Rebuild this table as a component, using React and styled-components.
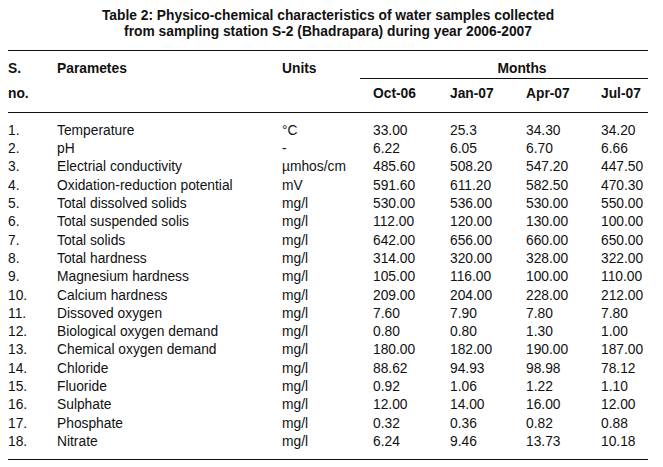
import styled, { createGlobalStyle } from 'styled-components'

const GlobalStyle = createGlobalStyle`
  html, body {
    margin: 0;
    padding: 0;
    background: #fff;
  }
  body {
    font-family: "Liberation Sans", Arial, sans-serif;
    color: #111;
  }
`

const months = ['Oct-06', 'Jan-07', 'Apr-07', 'Jul-07']

const rows = [
  ['Temperature', '°C', '33.00', '25.3', '34.30', '34.20'],
  ['pH', '-', '6.22', '6.05', '6.70', '6.66'],
  ['Electrial conductivity', 'µmhos/cm', '485.60', '508.20', '547.20', '447.50'],
  ['Oxidation-reduction potential', 'mV', '591.60', '611.20', '582.50', '470.30'],
  ['Total dissolved solids', 'mg/l', '530.00', '536.00', '530.00', '550.00'],
  ['Total suspended solis', 'mg/l', '112.00', '120.00', '130.00', '100.00'],
  ['Total solids', 'mg/l', '642.00', '656.00', '660.00', '650.00'],
  ['Total hardness', 'mg/l', '314.00', '320.00', '328.00', '322.00'],
  ['Magnesium hardness', 'mg/l', '105.00', '116.00', '100.00', '110.00'],
  ['Calcium hardness', 'mg/l', '209.00', '204.00', '228.00', '212.00'],
  ['Dissoved oxygen', 'mg/l', '7.60', '7.90', '7.80', '7.80'],
  ['Biological oxygen demand', 'mg/l', '0.80', '0.80', '1.30', '1.00'],
  ['Chemical oxygen demand', 'mg/l', '180.00', '182.00', '190.00', '187.00'],
  ['Chloride', 'mg/l', '88.62', '94.93', '98.98', '78.12'],
  ['Fluoride', 'mg/l', '0.92', '1.06', '1.22', '1.10'],
  ['Sulphate', 'mg/l', '12.00', '14.00', '16.00', '12.00'],
  ['Phosphate', 'mg/l', '0.32', '0.36', '0.82', '0.88'],
  ['Nitrate', 'mg/l', '6.24', '9.46', '13.73', '10.18'],
]

export default function App() {
  return (
    <>
      <GlobalStyle />
      <Page>
        <Caption>
          Table 2: Physico-chemical characteristics of water samples collected
          <br />
          from sampling station S-2 (Bhadrapara) during year 2006-2007
        </Caption>
        <Table>
          <Header>
            <HeadCell>S.</HeadCell>
            <HeadCell>Parametes</HeadCell>
            <HeadCell>Units</HeadCell>
            <MonthsCell>Months</MonthsCell>
            <HeadCell $second>no.</HeadCell>
            <HeadCell $second />
            <HeadCell $second />
            {months.map(m => (
              <HeadCell key={m} $second $month>{m}</HeadCell>
            ))}
          </Header>
          <Body>
            {rows.map((r, i) => (
              <Row key={r[0]}>
                <Cell>{i + 1}.</Cell>
                <Cell>{r[0]}</Cell>
                <Cell>{r[1]}</Cell>
                {r.slice(2).map((v, j) => (
                  <Cell key={j} $month>{v}</Cell>
                ))}
              </Row>
            ))}
          </Body>
        </Table>
      </Page>
    </>
  )
}

const columns = '49px 225px 78px 77px 76px 75px 60px'

const Page = styled.div`
  width: 640px;
  padding: 7.5px 0 0 8px;
`

const Caption = styled.h1`
  margin: 0 0 10.5px;
  font-size: 13.8px;
  line-height: 16px;
  font-weight: bold;
  text-align: center;
`

const Table = styled.div`
  border-top: 1px solid #111;
  border-bottom: 1px solid #111;
  font-size: 13.8px;
`

const Header = styled.div`
  display: grid;
  grid-template-columns: ${columns};
  border-bottom: 1px solid #111;
  font-weight: bold;
`

const HeadCell = styled.div`
  line-height: 18px;
  padding: ${p => (p.$second ? '6px 0 9px' : '9px 0 1px')};
  padding-left: ${p => (p.$month ? '13px' : '0')};
  white-space: nowrap;
`

const MonthsCell = styled.div`
  grid-column: 4 / 8;
  line-height: 18px;
  padding: 9px 0 0 36px;
  text-align: center;
  border-bottom: 1px solid #111;
`

const Body = styled.div`
  padding: 8.85px 0 7.75px;
`

const Row = styled.div`
  display: grid;
  grid-template-columns: ${columns};
  line-height: 18.3px;
`

const Cell = styled.div`
  padding-left: ${p => (p.$month ? '13px' : '0')};
  white-space: nowrap;
`
